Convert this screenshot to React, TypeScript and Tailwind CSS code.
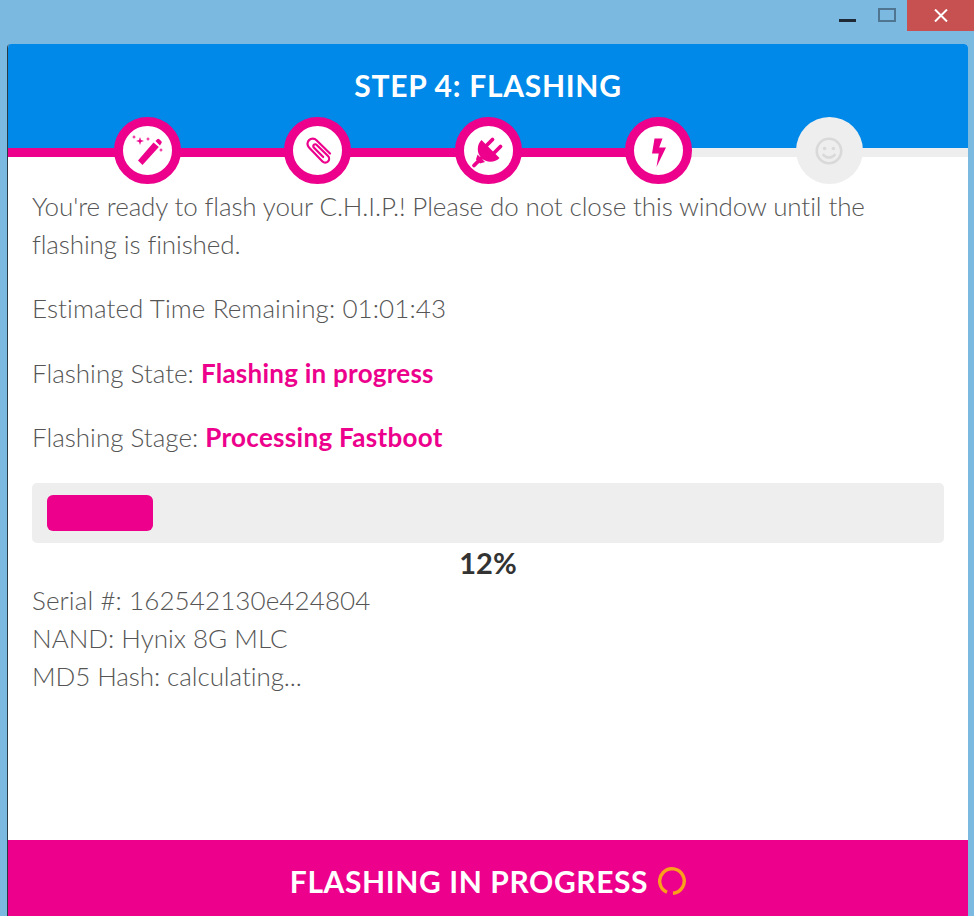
import { FaRegSmile } from "react-icons/fa";

const Wand = () => (
  <svg width="44" height="44" viewBox="0 0 44 44" fill="#ec008c">
    <path d="M13 31.5 L28.5 13.5 L33.8 18 L17.5 36 Z" />
    <path d="M30.5 12 L32.2 10.2 Q33.2 9.4 34.2 10.2 L36.4 12.2 Q37.2 13.2 36.4 14.2 L34.9 16.5 Z" />
    <path d="M15 8 L16 11 L19 12 L16 13 L15 16 L14 13 L11 12 L14 11 Z" />
    <path d="M9 5.8 L9.6 7.4 L11.2 8 L9.6 8.6 L9 10.2 L8.4 8.6 L6.8 8 L8.4 7.4 Z" />
    <path d="M23 7.8 L23.6 9.4 L25.2 10 L23.6 10.6 L23 12.2 L22.4 10.6 L20.8 10 L22.4 9.4 Z" />
    <path d="M36 18.8 L36.6 20.4 L38.2 21 L36.6 21.6 L36 23.2 L35.4 21.6 L33.8 21 L35.4 20.4 Z" />
  </svg>
);

const Clip = () => (
  <svg width="44" height="44" viewBox="0 0 44 44" fill="none" stroke="#ec008c" strokeWidth="2.2" strokeLinecap="round">
    <path d="M34 24.5 L20.5 11.2 A5.2 5.2 0 0 0 13 18.6 L26.5 32.4 A3.8 3.8 0 0 0 32 27 L20.5 15.8 A1.8 1.8 0 0 0 17.8 18.4 L27.2 28" />
  </svg>
);

const Plug = () => (
  <svg width="44" height="44" viewBox="0 0 44 44" fill="#ec008c">
    <path d="M15.5 11 L33.5 29 A12.7 12.7 0 0 1 15.5 11 Z" />
    <path d="M21 16 L26.5 10.5 M28.5 23.5 L34.5 17.5 M15 29.5 L8 36.5" stroke="#ec008c" strokeWidth="3.8" strokeLinecap="round" />
    <path d="M11.5 25.5 L19 33 L14 34.5 L10 30.5 Z" />
  </svg>
);

const Bolt = () => (
  <svg width="44" height="44" viewBox="0 0 44 44" fill="#ec008c">
    <path d="M17.5 9.5 H25.5 L22.2 18.5 H29 L19.5 38 L21.7 24.5 H15 Z" />
  </svg>
);

const steps = [Wand, Clip, Plug, Bolt];

export default function App() {
  return (
    <div className="w-[974px] h-[916px] overflow-hidden bg-[#7cb9e1] flex flex-col font-['Lato','Liberation_Sans',sans-serif]">
      <div className="h-[44px] shrink-0 flex justify-end items-start">
        <div className="w-[17px] h-[3px] bg-[#1f2a36] mt-[19px] mr-[22px]" />
        <div className="w-[18px] h-[14px] border-2 border-[#4f7591] mt-[8px] mr-[11px]" />
        <div className="w-[67px] h-[31px] bg-[#c75050] flex items-center justify-center">
          <svg width="14" height="13" viewBox="0 0 14 13" stroke="#ffffff" strokeWidth="2">
            <path d="M1 0.5 L13 12.5 M13 0.5 L1 12.5" />
          </svg>
        </div>
      </div>
      <div className="w-[961px] ml-[7px] flex-1 flex flex-col bg-white rounded-t-[4px] overflow-hidden border-l border-[#2a3a44]">
        <div className="h-[104px] shrink-0 bg-[#0089e9] pt-[24px] text-center text-white text-[30px] leading-[34px] font-bold tracking-[0.72px]">
          STEP 4: FLASHING
        </div>
        <div className="h-[9px] shrink-0 flex">
          <div className="w-[651px] bg-[#ec008c]" />
          <div className="flex-1 bg-[#eeeeee]" />
        </div>
        <div className="h-[70px] shrink-0 flex gap-[103.5px] pl-[105.5px] -mt-[40px] relative">
          {steps.map((Icon, i) => (
            <div
              key={i}
              className="w-[67px] h-[67px] shrink-0 rounded-full bg-white border-[9px] border-[#ec008c] flex items-center justify-center"
            >
              <div className="shrink-0 w-[44px] h-[44px]">
                <Icon />
              </div>
            </div>
          ))}
          <div className="w-[67px] h-[67px] shrink-0 rounded-full bg-[#eeeeee] flex items-center justify-center text-[#d9d9d9]">
            <FaRegSmile size={28} />
          </div>
        </div>
        <div className="flex-1 px-[24px] text-[26px] leading-[38px] font-light text-[#555555]">
          <p className="tracking-[-0.12px]">
            You're ready to flash your C.H.I.P.! Please do not close this window until the flashing is finished.
          </p>
          <p className="mt-[26px] tracking-[0.09px]">Estimated Time Remaining: 01:01:43</p>
          <p className="mt-[27px]">
            Flashing State: <span className="font-bold text-[#ec008c] tracking-[0.25px]">Flashing in progress</span>
          </p>
          <p className="mt-[26px]">
            Flashing Stage: <span className="font-bold text-[#ec008c] tracking-[0.3px]">Processing Fastboot</span>
          </p>
          <div className="mt-[27px] w-[912px] h-[60px] bg-[#eeeeee] rounded-[5px] pl-[15px] pt-[12px]">
            <div className="w-[106px] h-[36px] bg-[#ec008c] rounded-[6px]" />
          </div>
          <div className="text-center font-bold text-[#333333] text-[29px] leading-[37px] mt-[1px]">12%</div>
          <div className="tracking-[0.1px]">Serial #: 162542130e424804</div>
          <div>NAND: Hynix 8G MLC</div>
          <div className="tracking-[-0.08px]">MD5 Hash: calculating...</div>
        </div>
        <div className="h-[76px] shrink-0 bg-[#ec008c] pt-[6px] flex items-center justify-center gap-[10px] text-white text-[30px] font-bold tracking-[0.6px]">
          <span>FLASHING IN PROGRESS</span>
          <svg width="28" height="28" viewBox="0 0 28 28" fill="none">
            <path d="M15 26.2 A12.25 12.25 0 1 0 9 25.2" stroke="#f9a11b" strokeWidth="3.4" />
          </svg>
        </div>
      </div>
    </div>
  );
}
